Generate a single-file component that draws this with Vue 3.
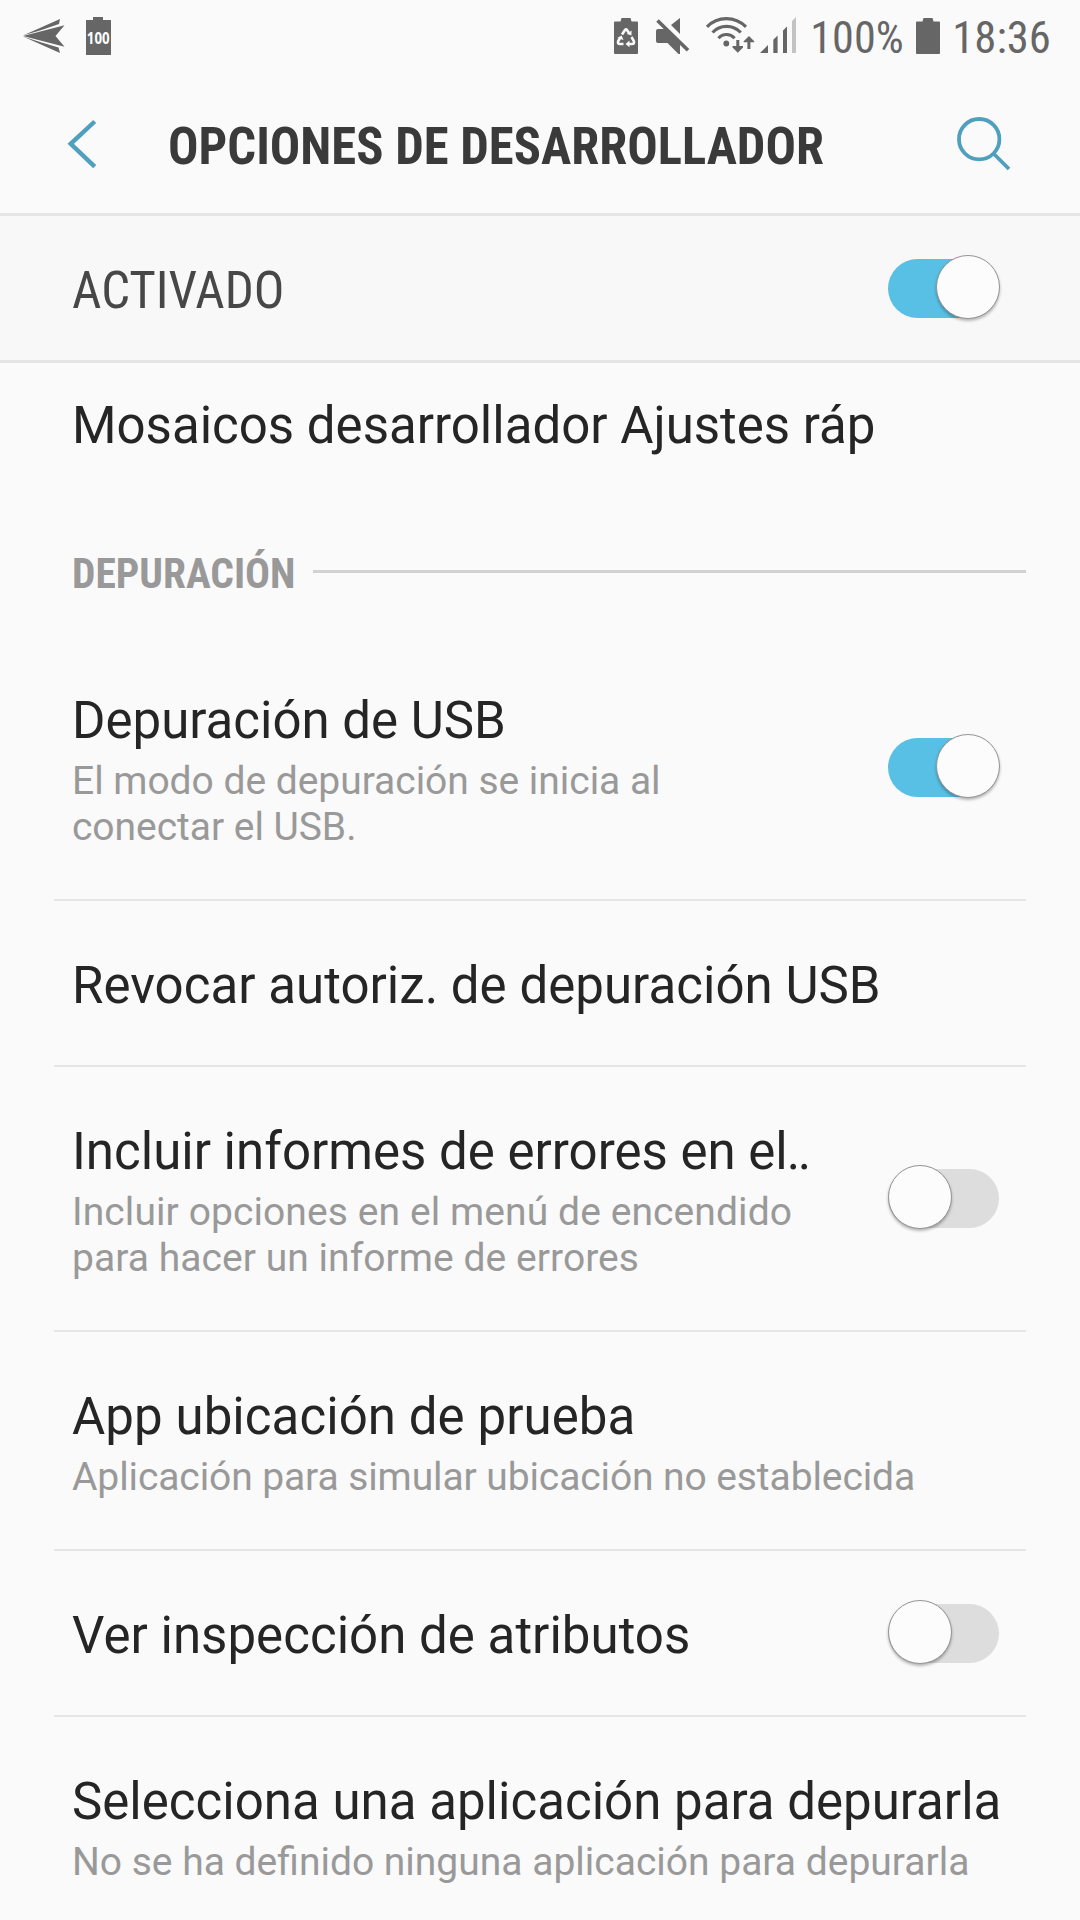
<script setup>
const items = [
  { title: 'Depuración de USB', lines: [{ text: 'El modo de depuración se inicia al', spacing: -0.03 }, { text: 'conectar el USB.', spacing: -0.04 }], toggle: true, on: true },
  { title: 'Revocar autoriz. de depuración USB', spacing: 0.04, lines: [] },
  { title: 'Incluir informes de errores en el', dots: true, lines: [{ text: 'Incluir opciones en el menú de encendido', spacing: 0.09 }, { text: 'para hacer un informe de errores', spacing: 0.05 }], toggle: true, on: false },
  { title: 'App ubicación de prueba', spacing: 0.07, lines: [{ text: 'Aplicación para simular ubicación no establecida', spacing: -0.1 }] },
  { title: 'Ver inspección de atributos', spacing: 0.03, lines: [], toggle: true, on: false },
  { title: 'Selecciona una aplicación para depurarla', spacing: 0.02, lines: [{ text: 'No se ha definido ninguna aplicación para depurarla', spacing: 0 }] },
]
const tracking = (value) => (value ? { letterSpacing: value + 'px' } : null)
</script>

<template>
  <div class="screen">
    <svg class="status" width="1080" height="72" viewBox="0 0 1080 72" fill="#666">
      <path d="M23 35.5L60 19L59 24L40 30.6ZM23 36L64.5 25.2L55.5 36L64.5 46.7ZM23 36.5L40 41.9L58.5 47.6L60 53Z" />
      <path d="M93 17H103V20H111V55H86V20H93Z" />
      <text class="badge" x="86.8" y="44" textLength="22.8" lengthAdjust="spacingAndGlyphs">100</text>

      <path d="M621.5 18H630.5L631.5 21.5H637Q638 21.5 638 22.5V53Q638 54 637 54H615Q614 54 614 53V22.5Q614 21.5 615 21.5H620.5Z" />
      <g fill="none" stroke="#fafafa" stroke-width="2.6">
        <path d="M622 34.5L625 30Q626 28.8 627 30L629 33" />
        <path d="M631.5 37L633.8 41Q634.8 44 632 44H628" />
        <path d="M623.5 44H620Q617.2 44 618.2 41L620.5 37.5" />
      </g>
      <path fill="#fafafa" d="M631.5 30.5V35.5L626.8 34ZM629.5 40.5V47.2L625.5 44ZM617.2 38L621.6 35.5L623.5 40Z" />

      <path d="M680 18V34L671 25Z" />
      <path d="M658 29H666.5L680 42.5V54H678.5L667.5 43H658Q656 43 656 41V31Q656 29 658 29Z" />
      <path d="M657.5 20.5L688 50.3" fill="none" stroke="#666" stroke-width="3.6" />

      <g fill="none" stroke="#666" stroke-width="3.1">
        <path d="M707 26.8Q715 18.6 726.3 18.6T746 26.8" />
        <path d="M712.5 32.5Q718 26.4 726.5 26.4T740.8 32.5" />
        <path d="M718.5 38.2Q721.8 34.5 726.5 34.5T734.6 38.2" />
      </g>
      <circle cx="726.3" cy="43.5" r="2.9" />
      <path d="M736.3 40H739.3V46H743V47.5L737.8 52.8L732.5 47.5V46H736.3ZM747.4 49V42.3H743.7V41.2L749 36L754.2 41.2V42.3H750.4V49Z" />
      <path d="M760 53L768 45V53ZM773.3 53V39.7L777.6 35.5V53ZM783 53V30.5L787 26.5V53Z" />
      <path fill="#c3c3c3" d="M792 53V21L796 17V53Z" />
      <text class="cond" x="810.3" y="52.8" font-size="45" textLength="93.4" lengthAdjust="spacingAndGlyphs">100%</text>
      <path d="M923.5 18H932.5L933.5 21.5H939Q940 21.5 940 22.5V53Q940 54 939 54H917Q916 54 916 53V22.5Q916 21.5 917 21.5H922.5Z" />
      <text class="cond" x="952.3" y="52.8" font-size="45" textLength="98.6" lengthAdjust="spacingAndGlyphs">18:36</text>
    </svg>

    <header class="appbar">
      <svg width="1080" height="141" viewBox="0 72 1080 141">
        <path d="M94.7 121.5L70.7 143.8L94.7 166.6" fill="none" stroke="#4f9fbe" stroke-width="4.4" />
        <text class="cond bold" x="168" y="164" font-size="51" fill="#3a3a3a" textLength="656" lengthAdjust="spacingAndGlyphs">OPCIONES DE DESARROLLADOR</text>
        <g fill="none" stroke="#4f9fbe" stroke-width="3.8">
          <circle cx="979.2" cy="139.2" r="20.2" />
          <path d="M993.5 153.5L1009 169" />
        </g>
      </svg>
    </header>

    <section class="master">
      <svg width="240" height="144" viewBox="70 216 240 144">
        <text class="cond" x="72" y="308" font-size="51" fill="#474747" textLength="212.5" lengthAdjust="spacingAndGlyphs">ACTIVADO</text>
      </svg>
      <span class="switch on"><i class="knob"></i></span>
    </section>

    <div class="item first"><div class="title">Mosaicos desarrollador Ajustes ráp</div></div>

    <div class="category">
      <svg width="243" height="60" viewBox="70 541 243 60">
        <text class="cond bold" x="72" y="588" font-size="42" fill="#999" textLength="223.5" lengthAdjust="spacingAndGlyphs">DEPURACIÓN</text>
      </svg>
      <div class="rule"></div>
    </div>

    <div v-for="item in items" :key="item.title" class="item">
      <div class="copy">
        <div class="title" :style="tracking(item.spacing)">{{ item.title }}<span v-if="item.dots" class="dots">..</span></div>
        <div v-if="item.lines.length" class="summary">
          <div v-for="line in item.lines" :key="line.text" :style="tracking(line.spacing)">{{ line.text }}</div>
        </div>
      </div>
      <span v-if="item.toggle" class="switch" :class="{ on: item.on }"><i class="knob"></i></span>
    </div>
  </div>
</template>

<style>
body { background: #fafafa; }
</style>

<style scoped>
.screen {
  width: 1080px;
  height: 1920px;
  overflow: hidden;
  background: #fafafa;
  font-family: Roboto, "Liberation Sans", sans-serif;
}
svg { display: block; flex: none; }
.cond { font-family: "Roboto Condensed", Roboto, sans-serif; font-stretch: 75%; }
.bold { font-weight: 700; }
.badge { font: 700 16.5px "Open Sans", sans-serif; fill: #fff; }
.appbar { height: 141px; border-bottom: 3px solid #e6e6e6; }
.master {
  display: flex;
  align-items: center;
  justify-content: space-between;
  height: 144px;
  padding: 0 80px 0 70px;
  background: #f8f8f8;
  border-bottom: 3px solid #e5e5e5;
}
.item {
  box-sizing: border-box;
  display: flex;
  align-items: center;
  justify-content: space-between;
  margin: 0 54px;
  padding: 0 26px 0 18px;
  border-bottom: 2px solid #e6e6e6;
}
.item:last-child { border-bottom: 0; }
.copy { padding: 55px 0 49px; }
.title { font-size: 51px; line-height: 60px; color: #252525; white-space: nowrap; }
.dots { margin-left: -1px; letter-spacing: -2.5px; }
.summary { margin-top: 7px; font-size: 39px; line-height: 46px; color: #999; white-space: nowrap; }
.first { height: 178px; border: 0; align-items: flex-start; padding-top: 33px; }
.category { display: flex; height: 95px; padding: 0 54px 0 70px; }
.rule { flex: 1; height: 3px; margin-top: 29px; background: #d2d2d2; }
.switch {
  position: relative;
  flex: none;
  width: 111px;
  height: 59px;
  margin-right: 1px;
  border-radius: 30px;
  background: #ddd;
}
.switch.on { background: #57c0e4; }
.knob {
  position: absolute;
  left: 0;
  top: -4px;
  box-sizing: border-box;
  width: 64px;
  height: 64px;
  border: 1px solid #959595;
  border-radius: 50%;
  background: #fcfcfc;
  box-shadow: 0 2px 3px rgba(0, 0, 0, 0.28);
}
.on .knob { left: 48px; }
</style>
